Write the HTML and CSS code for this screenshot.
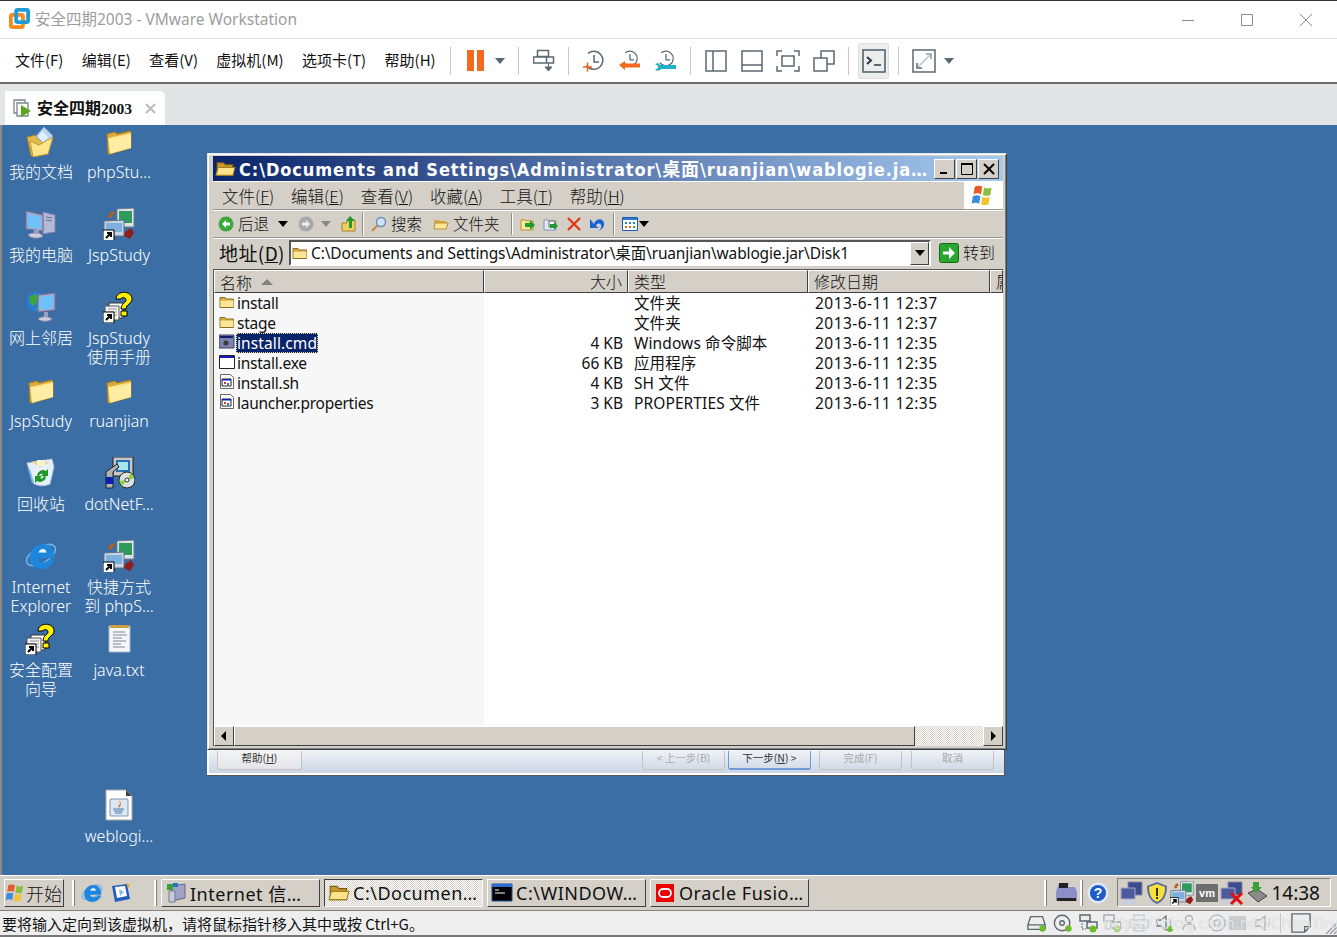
FILE: index.html
```html
<!DOCTYPE html>
<html lang="zh">
<head>
<meta charset="utf-8">
<title>安全四期2003 - VMware Workstation</title>
<link rel="stylesheet" href="styles.css">
</head>
<body>
<svg class="sprite" xmlns="http://www.w3.org/2000/svg">
  <symbol id="folder" viewBox="0 0 32 32"><path d="M4 9l8-2 2 2 13-3 1 1v16L7 29H5z" fill="#d9a93a" stroke="#a57f22"/><path d="M5 13l23-5v15L7 29z" fill="#fde58c"/><path d="M7 28l21-5V10L6 14z" fill="#fff2b0" opacity=".6"/></symbol>
  <symbol id="mydocs" viewBox="0 0 32 32"><path d="M2 12l8-2 2 2 14-2-4 18-16 3z" fill="#e3b84a" stroke="#a57f22"/><path d="M11 11l8-9 9 9-8 9z" fill="#b9d4f7" stroke="#7ea3d5"/><path d="M17 6l6 6-5 5-5-5z" fill="#e5f0ff"/><path d="M5 16l9 4 14-8-5 17-15 3z" fill="#fde58c" stroke="#c09a34"/></symbol>
  <symbol id="pc" viewBox="0 0 32 32"><path d="M18 4l12 3v17l-12 2z" fill="#b6b8d8" stroke="#7f81a6"/><path d="M21 9l6 1M21 12l6 1" stroke="#66688f"/><path d="M1 3l17 4v16L1 21z" fill="#a5a8cf" stroke="#6f7196"/><path d="M3 6l13 3v12L3 19z" fill="#6ec2fb"/><path d="M3 27c3-3 12-3 15 1-3 3-12 3-15-1z" fill="#cdcde0" stroke="#8688a6"/><path d="M9 22h5v4H9z" fill="#9a9cc0"/></symbol>
  <symbol id="net" viewBox="0 0 32 32"><circle cx="11" cy="11" r="10" fill="#2a7bd6"/><path d="M4 6l6-3 5 3-3 5-4 4-3-3zM11 16l5 1-1 4-3-1z" fill="#3fa63c"/><path d="M13 4l17-2v17l-17 2z" fill="#a5a8cf" stroke="#6f7196"/><path d="M15 6l13-2v13l-13 2z" fill="#6ec2fb"/><path d="M13 28c3-3 11-3 14 0-3 3-11 3-14 0z" fill="#cdcde0" stroke="#8688a6"/><path d="M19 21h4v5h-4z" fill="#9a9cc0"/></symbol>
  <symbol id="jsp" viewBox="0 0 32 32"><path d="M14 1l17-1v19H14z" fill="#dfe3e8" stroke="#6f7f8f"/><path d="M16 3h13v12H16z" fill="#2f9b5a"/><path d="M10 3c-3 1-5 4-4 7l4-1-1-2 3-1z" fill="#b2601c"/><path d="M1 13l20-1v16H1z" fill="#c8d4e4" stroke="#5f7088"/><path d="M3 15h16v9H3z" fill="#7db0de"/><path d="M22 24l6-4 3 5-4 6-6-3z" fill="#8e1f1f"/><path d="M0 22h11v11H0z" fill="#fff" stroke="#000"/><path d="M3 30l4-4M4 25h4v4" stroke="#000" stroke-width="2" fill="none"/></symbol>
  <symbol id="help" viewBox="0 0 32 32"><path d="M6 12h14v15H6z" fill="#fff" stroke="#333"/><path d="M2 15h14v14H2z" fill="#f2f2f2" stroke="#555"/><path d="M5 18h9M5 21h9M5 24h9" stroke="#999"/><path d="M13 8c0-9 16-9 16 0 0 5-6 5-6 10h-5c0-6 5-6 5-9 0-3-5-3-5-1z" fill="#ffef00" stroke="#000"/><path d="M18 20h6v5h-6z" fill="#ffef00" stroke="#000"/><path d="M0 21h11v11H0z" fill="#fff" stroke="#000"/><path d="M3 29l4-4M4 24h4v4" stroke="#000" stroke-width="2" fill="none"/></symbol>
  <symbol id="recycle" viewBox="0 0 32 32"><path d="M2 6l25-4 2 8-4 17c-6 3-13 2-17-1z" fill="#e6eef7" stroke="#a9bcd2"/><path d="M6 5l10-2 8 3-9 4z" fill="#e4d79a"/><path d="M12 3h8v6h-8z" fill="#f7f3d0"/><path d="M12 18a6 6 0 0 1 9-4l2-2v7h-7l2-2c-2-1-4 0-4 3zM21 20a6 6 0 0 1-9 4l-2 2v-7h7l-2 2c2 1 4 0 4-3z" fill="#1a9a22"/><path d="M4 12l4 14" stroke="#7db4e8" stroke-width="2"/></symbol>
  <symbol id="dotnet" viewBox="0 0 32 32"><path d="M10 0h20v19H10z" fill="#c8c8c8" stroke="#222"/><path d="M13 3h14v12H13z" fill="#2a6fb5"/><path d="M15 5h10v8H15z" fill="#a8e6ef"/><path d="M7 12l7-5 2 3-6 5v16H3V15z" fill="#b0b0b0" stroke="#222"/><path d="M3 20h7v7H3z" fill="#0a1fb0"/><circle cx="24" cy="23" r="8" fill="#d8e0e0" stroke="#222"/><path d="M24 23l4-7 3 5zM24 23l-5 6-3-5z" fill="#8fcf3a"/><circle cx="24" cy="23" r="2" fill="#fff" stroke="#333"/></symbol>
  <symbol id="ie" viewBox="0 0 32 32"><ellipse cx="16" cy="15" rx="16" ry="8" transform="rotate(-30 16 15)" fill="none" stroke="#6fb3e8" stroke-width="1.6"/><path d="M13 13h9c0-6-8-6-9 0z" fill="#e4f3ff"/><path d="M5 18C5 7 16 2 24 6c5 3 5 9 5 12H13c0 5 8 6 12 2h4c-3 8-13 11-19 7-3-2-5-5-5-9zm8-5h9c0-6-8-6-9 0z" fill="#1f86de" stroke="#1f86de" stroke-width=".8" fill-rule="evenodd"/></symbol>
  <symbol id="note" viewBox="0 0 32 32"><path d="M6 3h21v26H6z" fill="#f4f6fb" stroke="#aab4c8"/><path d="M7 2h19v3H7z" fill="#c7a040"/><path d="M10 9h12M10 12h14M10 15h9M10 18h13M10 21h8M10 24h12" stroke="#7f8896"/></symbol>
  <symbol id="javafile" viewBox="0 0 32 32"><path d="M3 1h20l6 6v24H3z" fill="#fff" stroke="#a8a8a8"/><path d="M23 1v6h6z" fill="#444"/><rect x="7" y="10" width="18" height="17" rx="1" fill="#dbe7f2" stroke="#7d96ae"/><path d="M16 12c3 3-2 4 0 7 1-2 3-3 1-7z" fill="#e8731a"/><path d="M10 20h11M11 22h9M12 24h7" stroke="#4a7aa6"/></symbol>
  <symbol id="f16" viewBox="0 0 16 16"><path d="M1 5V3.500h5L7 5h7.500v8.500H1z" fill="#d8a93a" stroke="#8a6f20"/><path d="M1.500 6.500h13v6.500h-13z" fill="#fde59a"/></symbol>
  <symbol id="fopen" viewBox="0 0 20 16"><path d="M2 2h6l2 2h7v10H2z" fill="#c9992b" stroke="#7d5c10"/><path d="M3 6.500h16l-2 7.500H1z" fill="#fce38c" stroke="#a47f20"/></symbol>
  <symbol id="cmdfile" viewBox="0 0 16 16"><path d="M0 1h15v13H0z" fill="#7c84ad" stroke="#3b3f66"/><path d="M1 2h13v2H1z" fill="#131c6e"/><circle cx="7" cy="9" r="2.500" fill="#3b3b3b"/></symbol>
  <symbol id="exefile" viewBox="0 0 16 16"><path d="M.5 1.500h15v13H.5z" fill="#fff" stroke="#222"/><path d="M1 2h14v2H1z" fill="#0c1ec0"/></symbol>
  <symbol id="shfile" viewBox="0 0 16 16"><path d="M1.500.500h10l3 3v11h-13z" fill="#fff" stroke="#666"/><path d="M3 5h9v7H3z" fill="#fff" stroke="#222"/><path d="M3 5h9v1.500H3z" fill="#0c1ec0"/><path d="M5 8h2v2H5z" fill="#d33"/><path d="M8 9h2v2H8z" fill="#27a"/></symbol>
  <symbol id="winflag" viewBox="0 0 20 20"><path d="M3 3c2-1 4-1 6 0l-1 6c-2-1-4-1-6 0z" fill="#e8592b"/><path d="M10.500 3.500c2 1 4 1 6 0l-1 6c-2 1-4 1-6 0z" fill="#8cbf3f"/><path d="M1.500 10.500c2-1 4-1 6 0l-1 6c-2-1-4-1-6 0z" fill="#3d8be0"/><path d="M9 11c2 1 4 1 6 0l-1 6c-2 1-4 1-6 0z" fill="#f4c430"/></symbol>
  <symbol id="ctrlalt" viewBox="0 0 22 24"><path d="M4.500 1.500h11v6h-11zM.5 8h13v6H.5zM13.500 8h7v6h-7z" fill="none" stroke="#5a6872" stroke-width="1.500"/><path d="M15.500 14v5M12 18h7l-3.500 4z" fill="#5a6872" stroke="#5a6872"/></symbol>
  <symbol id="clock" viewBox="0 0 22 22"><path d="M5 3.500a9 9 0 1 1-1.500 12" fill="none" stroke="#5a6872" stroke-width="1.500"/><path d="M11 5v7h5" fill="none" stroke="#5a6872" stroke-width="1.500"/></symbol>
  <symbol id="view1" viewBox="0 0 22 22"><path d="M1 1h20v20H1zM8 1v20" fill="none" stroke="#5a6872" stroke-width="1.500"/></symbol>
  <symbol id="view2" viewBox="0 0 22 22"><path d="M1 1h20v20H1zM1 15h20" fill="none" stroke="#5a6872" stroke-width="1.500"/></symbol>
  <symbol id="view3" viewBox="0 0 24 22"><path d="M6 1H1v5M18 1h5v5M6 21H1v-5M18 21h5v-5M6 6h12v10H6z" fill="none" stroke="#5a6872" stroke-width="1.500"/></symbol>
  <symbol id="view4" viewBox="0 0 22 22"><path d="M1 8h13v13H1zM8 8V1h13v13h-7" fill="none" stroke="#5a6872" stroke-width="1.500"/></symbol>
  <symbol id="term" viewBox="0 0 24 24"><path d="M1 1h22v22H1z" fill="none" stroke="#4a5b68" stroke-width="1.500"/><path d="M5 8l4 3.500L5 15" fill="none" stroke="#2e3b44" stroke-width="2"/><path d="M12 16h7" stroke="#2e3b44" stroke-width="1.500"/></symbol>
  <symbol id="full" viewBox="0 0 24 24"><path d="M1 1h22v22H1z" fill="none" stroke="#5a6872" stroke-width="1.500"/><path d="M6 18L18 6" stroke="#b7c0c8" stroke-width="1.500"/><path d="M14 5h5v5" fill="none" stroke="#8a9aa6" stroke-width="1.500"/><path d="M5 14v5h5" fill="none" stroke="#5a6872" stroke-width="1.500"/></symbol>
  <symbol id="hdd" viewBox="0 0 22 18"><path d="M4 2h13l3 9v5H1v-5zM1 11h19" fill="none" stroke="#5a6872" stroke-width="1.500"/><circle cx="17" cy="15" r="3.500" fill="#6cbf2a"/></symbol>
  <symbol id="cd" viewBox="0 0 22 20"><circle cx="10" cy="10" r="8.500" fill="none" stroke="#5a6872" stroke-width="1.500"/><circle cx="10" cy="10" r="2.500" fill="none" stroke="#5a6872" stroke-width="1.500"/><circle cx="17" cy="16" r="3.500" fill="#6cbf2a"/></symbol>
  <symbol id="lan" viewBox="0 0 20 20"><path d="M1 2h10v6H1zM8 9h10v6H8z" fill="none" stroke="#5a6872" stroke-width="1.500"/><path d="M3 10v6h4" fill="none" stroke="#5a6872" stroke-dasharray="2 1"/><circle cx="14" cy="16" r="3.500" fill="#6cbf2a"/></symbol>
  <symbol id="printer" viewBox="0 0 20 20"><path d="M5 7V2h10v5M1 7h18v8H1zM5 12h10v6H5z" fill="none" stroke="#a9b2b8" stroke-width="1.300"/></symbol>
  <symbol id="speaker" viewBox="0 0 20 20"><path d="M2 7h4l5-4v14l-5-4H2z" fill="none" stroke="#6c7880" stroke-width="1.300"/><path d="M14 6c2 2 2 6 0 8" fill="none" stroke="#a9b2b8"/><circle cx="15" cy="16" r="3" fill="#6cbf2a"/></symbol>
  <symbol id="speaker2" viewBox="0 0 20 20"><path d="M2 7h4l5-4v14l-5-4H2z" fill="none" stroke="#a9b2b8" stroke-width="1.300"/><path d="M14 6c2 2 2 6 0 8" fill="none" stroke="#c4cbd0"/></symbol>
  <symbol id="stick" viewBox="0 0 20 20"><circle cx="8" cy="6" r="3.500" fill="none" stroke="#a9b2b8" stroke-width="1.300"/><path d="M2 17c0-4 3-6 6-6s6 2 6 6" fill="none" stroke="#a9b2b8" stroke-width="1.300"/></symbol>
  <symbol id="disc" viewBox="0 0 20 20"><circle cx="10" cy="10" r="8" fill="none" stroke="#b4bbc0" stroke-width="1.300"/><circle cx="10" cy="10" r="3" fill="none" stroke="#b4bbc0" stroke-width="1.300"/></symbol>
  <symbol id="memo" viewBox="0 0 22 22"><path d="M1 1h20v14l-6 6H1zM21 15h-6v6" fill="none" stroke="#5a6872" stroke-width="1.500"/></symbol>
  <symbol id="traynet" viewBox="0 0 24 24"><path d="M8 1h14v13H8z" fill="#3b4c8f" stroke="#889"/><path d="M1 7h14v11H1z" fill="#4a5a9f" stroke="#aab"/><path d="M2 19h14v4H2z" fill="#c9cde0"/></symbol>
  <symbol id="shield" viewBox="0 0 24 24"><path d="M12 1l10 4c0 9-3 15-10 18C5 20 2 14 2 5z" fill="#5a6a9a"/><path d="M12 3l8 3c0 7-2 12-8 15C6 18 4 13 4 6z" fill="#f7e03a"/><path d="M11 7h2v8h-2zM11 16h2v2h-2z" fill="#333"/></symbol>
</svg>

<div class="app">
  <header class="titlebar">
    <svg class="logo" viewBox="0 0 20 20"><rect x="1.800" y="6.500" width="11.500" height="11.700" rx="1.500" fill="none" stroke="#f58a1f" stroke-width="3.600"/><rect x="6.800" y="1.800" width="11.400" height="11.700" rx="1.500" fill="none" stroke="#1f9ad6" stroke-width="3.600"/></svg>
    <span class="app-title">安全四期2003 - VMware Workstation</span>
    <div class="winctl">
      <svg viewBox="0 0 14 14"><path d="M1 7.500h12" stroke="#8b8b8b"/></svg>
      <svg viewBox="0 0 14 14"><path d="M1.500 1.500h11v11h-11z" fill="none" stroke="#8b8b8b"/></svg>
      <svg viewBox="0 0 14 14"><path d="M1 1l12 12M13 1L1 13" stroke="#8b8b8b"/></svg>
    </div>
  </header>

  <nav class="toolbar">
    <div class="menus"><span>文件(F)</span><span>编辑(E)</span><span>查看(V)</span><span>虚拟机(M)</span><span>选项卡(T)</span><span>帮助(H)</span></div>
    <i class="tsep first"></i>
    <div class="pause"><b></b><b></b></div><i class="caret"></i>
    <i class="tsep s1"></i>
    <svg class="ti i-ctrl"><use href="#ctrlalt"/></svg>
    <i class="tsep s2"></i>
    <svg class="ti i-clock" viewBox="0 0 22 22"><use href="#clock" width="22" height="22"/><path d="M0 17h9M4.500 12.500v9" stroke="#e8641e" stroke-width="1.500"/></svg>
    <svg class="ti i-clock" viewBox="0 0 22 22"><use href="#clock" width="22" height="18"/><path d="M0 15l6-4v2.500h15v4H6V20z" fill="#f4691f"/></svg>
    <svg class="ti i-clock" viewBox="0 0 22 22"><use href="#clock" width="22" height="18"/><path d="M0 14c2-1 4-1 5 1h16v4H6c-1 2-4 2-6 1l3-2v-2z" fill="#1fb0cc"/></svg>
    <i class="tsep s3"></i>
    <svg class="ti i-view"><use href="#view1"/></svg>
    <svg class="ti i-view"><use href="#view2"/></svg>
    <svg class="ti i-view3"><use href="#view3"/></svg>
    <svg class="ti i-view4"><use href="#view4"/></svg>
    <i class="tsep s4"></i>
    <div class="term-btn"><svg><use href="#term"/></svg></div>
    <i class="tsep s5"></i>
    <svg class="ti i-full"><use href="#full"/></svg><i class="caret c2"></i>
  </nav>

  <div class="tabbar">
    <div class="tab">
      <svg class="tab-ico" viewBox="0 0 18 18"><path d="M1 1h11v13H1z" fill="none" stroke="#7a858d" stroke-width="1.300"/><path d="M4 4h11v13H4z" fill="#fff" stroke="#7a858d" stroke-width="1.300"/><path d="M8 6l10 6-10 6z" fill="#5aa51e"/></svg>
      <span class="tab-name">安全四期<em>2003</em></span>
      <svg class="tab-x" viewBox="0 0 11 11"><path d="M1 1l9 9M10 1l-9 9" stroke="#b9bcc0" stroke-width="2"/></svg>
    </div>
  </div>

  <main class="desktop">
    <div class="dgrid">
      <div class="dicon"><svg><use href="#mydocs"/></svg><span>我的文档</span></div>
      <div class="dicon"><svg><use href="#folder"/></svg><span>phpStu…</span></div>
      <div class="dicon"><svg><use href="#pc"/></svg><span>我的电脑</span></div>
      <div class="dicon"><svg><use href="#jsp"/></svg><span>JspStudy</span></div>
      <div class="dicon"><svg><use href="#net"/></svg><span>网上邻居</span></div>
      <div class="dicon"><svg><use href="#help"/></svg><span>JspStudy<br>使用手册</span></div>
      <div class="dicon"><svg><use href="#folder"/></svg><span>JspStudy</span></div>
      <div class="dicon"><svg><use href="#folder"/></svg><span>ruanjian</span></div>
      <div class="dicon"><svg><use href="#recycle"/></svg><span>回收站</span></div>
      <div class="dicon"><svg><use href="#dotnet"/></svg><span>dotNetF…</span></div>
      <div class="dicon"><svg><use href="#ie"/></svg><span>Internet<br>Explorer</span></div>
      <div class="dicon"><svg><use href="#jsp"/></svg><span>快捷方式<br>到 phpS…</span></div>
      <div class="dicon"><svg><use href="#help"/></svg><span>安全配置<br>向导</span></div>
      <div class="dicon"><svg><use href="#note"/></svg><span>java.txt</span></div>
      <div class="dicon slot-last"><svg><use href="#javafile"/></svg><span>weblogi…</span></div>
    </div>

    <section class="wizard">
      <div class="wz-row">
        <span class="wz-btn help">帮助(<u>H</u>)</span>
        <span class="wz-btn off back">&lt; 上一步(B)</span>
        <span class="wz-btn next">下一步(<u>N</u>) &gt;</span>
        <span class="wz-btn off finish">完成(F)</span>
        <span class="wz-btn off cancel">取消</span>
      </div>
    </section>

    <section class="explorer">
      <div class="ex-title">
        <svg class="ex-ico"><use href="#fopen"/></svg>
        <span class="ex-caption">C:\Documents and Settings\Administrator\桌面\ruanjian\wablogie.ja…</span>
        <span class="capbtn min"><svg viewBox="0 0 16 14"><path d="M3 11h7" stroke="#000" stroke-width="2"/></svg></span>
        <span class="capbtn max"><svg viewBox="0 0 16 14"><path d="M2.500 2.500h11v10h-11z" fill="none" stroke="#000"/><path d="M2 2h12" stroke="#000" stroke-width="2"/></svg></span>
        <span class="capbtn close"><svg viewBox="0 0 16 14"><path d="M3 2l10 10M13 2L3 12" stroke="#000" stroke-width="2"/></svg></span>
      </div>
      <div class="ex-menu">
        <span>文件(<u>F</u>)</span><span>编辑(<u>E</u>)</span><span>查看(<u>V</u>)</span><span>收藏(<u>A</u>)</span><span>工具(<u>T</u>)</span><span>帮助(<u>H</u>)</span>
        <div class="flag"><svg><use href="#winflag"/></svg></div>
      </div>
      <div class="ex-tools">
        <svg class="t16" viewBox="0 0 16 16"><circle cx="8" cy="8" r="7.500" fill="#3ba83b"/><path d="M8 4L4 8l4 4V9.500h4v-3H8z" fill="#fff"/></svg>
        <span class="tlabel back-l">后退</span><i class="dcaret"></i>
        <svg class="t16 t-fwd" viewBox="0 0 16 16"><circle cx="8" cy="8" r="7.500" fill="#a8a8a8"/><path d="M8 4l4 4-4 4V9.500H4v-3h4z" fill="#eee"/></svg>
        <i class="dcaret gray"></i>
        <svg class="t16 t-up" viewBox="0 0 16 16"><path d="M1 7h5V4h8v11H1z" fill="#f2cd62" stroke="#a58428"/><path d="M9 0l5 5h-3v7H8V5H5z" fill="#1f9a2d"/></svg>
        <i class="vsep"></i>
        <svg class="t16" viewBox="0 0 16 16"><circle cx="10" cy="6" r="4.500" fill="#cfe6fa" stroke="#6a8fb8" stroke-width="1.500"/><path d="M6.500 9.500L1 15" stroke="#c08a3a" stroke-width="2"/></svg>
        <span class="tlabel">搜索</span>
        <svg class="t16 t-fold" viewBox="0 0 16 16"><path d="M1 4h5l1 1h6v2H1z" fill="#d9a93a"/><path d="M2 7h13l-2 6H1z" fill="#fde59a" stroke="#b8912f"/></svg>
        <span class="tlabel">文件夹</span>
        <i class="vsep"></i>
        <svg class="t16" viewBox="0 0 16 16"><path d="M1 4h5l1 1h6v9H1z" fill="#fde59a" stroke="#b8912f"/><path d="M5 7h5V4l5 5-5 5v-3H5z" fill="#1f9a2d"/></svg>
        <svg class="t16" viewBox="0 0 16 16"><path d="M1 4h5l1 1h6v9H1z" fill="#dfe6f5" stroke="#8a94b0"/><path d="M6 5h6v6H6z" fill="#fff" stroke="#666"/><path d="M7 8h4V6l4 4-4 4v-2H7z" fill="#1f9a2d"/></svg>
        <svg class="t16" viewBox="0 0 16 16"><path d="M2 2l12 12M14 2L2 14" stroke="#e0391a" stroke-width="2.400"/></svg>
        <svg class="t16 t-undo" viewBox="0 0 16 16"><path d="M5 8C7 2 14 2 15 7c1 3-2 6-5 8 2-3 3-4 2-6-1-2-4-2-5 1l3 2H1V3z" fill="#1a63d6"/></svg>
        <i class="vsep"></i>
        <svg class="t16" viewBox="0 0 16 16"><path d="M.5 1.500h15v13H.5z" fill="#fff" stroke="#1b5fb5"/><path d="M1 2h14v2H1z" fill="#2a7bd6"/><path d="M3 6h2v2H3zM7 6h2v2H7zM11 6h2v2h-2z" fill="#2a7bd6"/><path d="M3 10h2v2H3zM7 10h2v2H7z" fill="#e0641a"/><path d="M11 10h2v2h-2z" fill="#3ba83b"/></svg>
        <i class="dcaret tight"></i>
      </div>
      <div class="ex-addr">
        <span class="addr-l">地址(<u>D</u>)</span>
        <div class="addr-box">
          <svg><use href="#f16"/></svg>
          <span class="addr-v">C:\Documents and Settings\Administrator\桌面\ruanjian\wablogie.jar\Disk1</span>
          <span class="addr-drop"><i></i></span>
        </div>
        <svg class="go" viewBox="0 0 20 20"><rect x=".5" y=".5" width="19" height="19" rx="2" fill="#2aa52e" stroke="#136b18"/><path d="M4 8.500h6V4l6 6-6 6v-4.500H4z" fill="#fff"/></svg>
        <span class="go-l">转到</span>
      </div>
      <div class="listpane">
        <div class="lhead">
          <span class="h-name">名称<i class="sort"></i></span>
          <span class="h-size">大小</span>
          <span>类型</span>
          <span>修改日期</span>
          <span class="h-clip">属</span>
        </div>
        <div class="lbody">
          <div class="lrow"><span class="c-name"><svg><use href="#f16"/></svg><b>install</b></span><span class="c-size"></span><span class="c-type">文件夹</span><span class="c-date">2013-6-11 12:37</span></div>
          <div class="lrow"><span class="c-name"><svg><use href="#f16"/></svg><b>stage</b></span><span class="c-size"></span><span class="c-type">文件夹</span><span class="c-date">2013-6-11 12:37</span></div>
          <div class="lrow"><span class="c-name"><svg><use href="#cmdfile"/></svg><b class="sel">install.cmd</b></span><span class="c-size">4 KB</span><span class="c-type">Windows 命令脚本</span><span class="c-date">2013-6-11 12:35</span></div>
          <div class="lrow"><span class="c-name"><svg><use href="#exefile"/></svg><b>install.exe</b></span><span class="c-size">66 KB</span><span class="c-type">应用程序</span><span class="c-date">2013-6-11 12:35</span></div>
          <div class="lrow"><span class="c-name"><svg><use href="#shfile"/></svg><b>install.sh</b></span><span class="c-size">4 KB</span><span class="c-type">SH 文件</span><span class="c-date">2013-6-11 12:35</span></div>
          <div class="lrow"><span class="c-name"><svg><use href="#shfile"/></svg><b>launcher.properties</b></span><span class="c-size">3 KB</span><span class="c-type">PROPERTIES 文件</span><span class="c-date">2013-6-11 12:35</span></div>
        </div>
        <div class="hscroll">
          <span class="sb-btn"><svg viewBox="0 0 8 12"><path d="M6 1v10L1 6z" fill="#000"/></svg></span>
          <span class="sb-thumb"></span>
          <span class="sb-track"></span>
          <span class="sb-btn"><svg viewBox="0 0 8 12"><path d="M2 1v10l5-5z" fill="#000"/></svg></span>
        </div>
      </div>
    </section>
  </main>

  <div class="taskbar">
    <div class="start"><svg><use href="#winflag"/></svg><span>开始</span></div>
    <i class="grip g1"></i>
    <svg class="ql q1"><use href="#ie"/></svg>
    <svg class="ql q2" viewBox="0 0 22 22"><path d="M2 4l15-2 3 15-15 3z" fill="#1d5fc0"/><path d="M5 5l10-1 2 10-10 2z" fill="#fff"/><path d="M9 7l5 3-4 4z" fill="#8fb8e8"/><path d="M16 1l4 2-2 3z" fill="#f0a020"/></svg>
    <i class="grip g2"></i>
    <div class="task"><svg viewBox="0 0 22 22"><path d="M7 4l13-2v14l-13 3z" fill="#a0a3c8" stroke="#667"/><path d="M2 2h6v6H2z" fill="#3aa03a"/><path d="M8 1h5v4H8z" fill="#2a6fd0"/><path d="M4 9h6v11H4z" fill="#c8c9e0" stroke="#778"/></svg><span>Internet 信…</span></div>
    <div class="task active"><svg><use href="#fopen"/></svg><span>C:\Documen…</span></div>
    <div class="task"><svg viewBox="0 0 22 22"><path d="M1 2h20v17H1z" fill="#000" stroke="#1c4d96"/><path d="M1 2h20v3H1z" fill="#2a6fd0"/><path d="M4 8h4M4 11h10" stroke="#fff"/></svg><span>C:\WINDOW…</span></div>
    <div class="task"><svg viewBox="0 0 22 22"><rect x="2" y="2" width="18" height="18" fill="#ee0000"/><rect x="5" y="7" width="12" height="8" rx="4" fill="none" stroke="#fff" stroke-width="1.800"/></svg><span>Oracle Fusio…</span></div>
    <i class="grip g3"></i>
    <svg class="tb-print" viewBox="0 0 24 24"><path d="M5 2h10l-2 4h8l2 5v9H2v-9z" fill="#8b8fc8"/><path d="M5 2h9v5H5z" fill="#222"/><path d="M3 17h19v3H3z" fill="#222"/></svg>
    <i class="grip g4"></i>
    <svg class="tb-help" viewBox="0 0 22 22"><circle cx="11" cy="11" r="10.500" fill="#dfe8f5"/><circle cx="11" cy="11" r="8" fill="#1c5bc8"/><text x="11" y="16" text-anchor="middle" class="qmark">?</text></svg>
    <div class="tray">
      <svg><use href="#traynet"/></svg>
      <svg><use href="#shield"/></svg>
      <svg><use href="#jsp"/></svg>
      <svg viewBox="0 0 24 24"><rect x="1" y="3" width="22" height="18" rx="1" fill="#6e6e6e"/><text x="12" y="16" text-anchor="middle" class="vmt">vm</text></svg>
      <svg viewBox="0 0 24 24"><use href="#traynet" width="24" height="24"/><path d="M11 12l11 11M22 12L11 23" stroke="#e01010" stroke-width="3"/></svg>
      <svg viewBox="0 0 24 24"><path d="M3 12l9-4 10 7-9 6z" fill="#8a8a8a" stroke="#444"/><path d="M8 1h6v5h3l-6 6-5-6h2z" fill="#3aa03a"/></svg>
      <span class="clock">14:38</span>
    </div>
  </div>

  <footer class="statusbar">
    <span class="st-msg">要将输入定向到该虚拟机，请将鼠标指针移入其中或按 Ctrl+G。</span>
    <div class="st-icons">
      <svg><use href="#hdd"/></svg>
      <svg><use href="#cd"/></svg>
      <svg class="tight"><use href="#lan"/></svg>
      <svg class="faint"><use href="#lan"/></svg>
      <svg class="faint"><use href="#printer"/></svg>
      <svg><use href="#speaker"/></svg>
      <svg><use href="#stick"/></svg>
      <svg class="d"><use href="#disc"/></svg>
      <span class="st-block"></span>
      <svg><use href="#speaker2"/></svg>
      <i class="st-sep"></i>
      <svg><use href="#memo"/></svg>
      <svg class="resize" viewBox="0 0 12 12"><path d="M12 1L1 12M12 5l-7 7M12 9l-3 3" stroke="#9a9a9a" stroke-width="1.300"/></svg>
    </div>
    <span class="watermark">https://blog.csdn.net/ChenTing_</span>
  </footer>
</div>
</body>
</html>
```

FILE: styles.css
```css
* { box-sizing: border-box; }
html, body { margin: 0; height: 100%; overflow: hidden; background: #fff; }
body { font-family: "Noto Sans", "Noto Sans CJK SC", sans-serif; }
.sprite { display: block; width: 0; height: 0; }
i { display: block; font-style: normal; }
svg { display: block; flex: none; }

.app { display: flex; flex-direction: column; width: 1337px; height: 937px; border-top: 1px solid #333; }

/* window title */
.titlebar { height: 38px; display: flex; align-items: center; padding-left: 9px; background: #fff; border-bottom: 1px solid #e3e3e3; flex: none; }
.logo { width: 21px; height: 21px; margin-right: 5px; margin-top: -2px; }
.app-title { font: 15.500px "Noto Sans", "Noto Sans CJK SC", sans-serif; color: #9d9d9d; margin-top: -2px; }
.winctl { margin-left: auto; display: flex; gap: 45px; padding-right: 24px; }
.winctl svg { width: 14px; height: 14px; }

/* toolbar */
.toolbar { height: 45px; display: flex; align-items: center; flex: none; padding-left: 15px; background: #fff; border-bottom: 2px solid #6b6b6b; }
.menus { display: flex; gap: 18.400px; font: 15px "Noto Sans CJK SC", "Noto Sans", sans-serif; color: #111; width: 435px; margin-top: -2px; }
.tsep { width: 1px; height: 28px; background: #c5c5c5; }
.first { margin-right: 16px; }
.pause { display: flex; gap: 3px; }
.pause b { display: block; width: 7px; height: 21px; background: #f4691f; }
.caret { width: 0; height: 0; border: 5px solid transparent; border-top: 6px solid #5a6872; border-bottom: 0; margin-left: 11px; }
.s1 { margin-left: 13px; }
.ti { margin-left: 14px; }
.i-ctrl { width: 22px; height: 24px; }
.s2 { margin-left: 13px; }
.i-clock { width: 22px; height: 22px; }
.s2 + .i-clock { margin-left: 14px; }
.s3 { margin-left: 13px; }
.i-view { width: 22px; height: 22px; }
.ti.i-view3 { width: 24px; height: 22px; margin-left: 13px; }
.ti.i-view4 { width: 22px; height: 22px; margin-left: 13px; }
.s3 + .i-view { margin-left: 14px; }
.s4 { margin-left: 13px; }
.term-btn { width: 31px; height: 36px; margin-left: 9px; background: #eceded; border: 1px solid #dcdcdc; border-radius: 3px; display: flex; align-items: center; justify-content: center; }
.term-btn svg { width: 24px; height: 24px; }
.s5 { margin-left: 9px; }
.ti.i-full { width: 24px; height: 24px; margin-left: 13px; }
.c2 { margin-left: 8px; }

/* tabs */
.tabbar { height: 41px; flex: none; padding: 7px 0 0 5px; background: #e3e4e6; }
.tab { width: 160px; height: 34px; background: #fff; display: flex; align-items: center; padding-left: 8px; border-radius: 0 5px 0 0; }
.tab-ico { width: 18px; height: 18px; margin-right: 6px; }
.tab-name { font: 700 16px "Noto Sans CJK SC", sans-serif; color: #111; width: 108px; margin-top: -3px; }
.tab-name em { font: 700 15.500px "Liberation Serif", serif; }
.tab-x { width: 11px; height: 11px; }

/* desktop */
.desktop { position: relative; height: 750px; flex: none; background: #3b6ea5; border-left: 2px solid #8a8a8a; overflow: hidden; }
.dgrid { display: grid; grid-template-columns: 78px 78px; grid-auto-rows: 83px; }
.dicon { display: flex; flex-direction: column; align-items: center; color: #fff; font: 16px/19px "Noto Sans", "Noto Sans CJK SC", sans-serif; font-weight: 300; text-align: center; white-space: nowrap; }
.dicon svg { width: 32px; height: 32px; margin-bottom: 6px; }
.slot-last { grid-column: 2; grid-row: 9; }

/* explorer */
.explorer { position: absolute; left: 205px; top: 28px; width: 800px; height: 597px; background: #d4d0c8; border: 1px solid #404040; border-top-color: #e8e8e8; border-left-color: #e8e8e8; padding: 2px 3px 3px 5px; box-shadow: inset 1px 1px #fff, inset -1px -1px #808080; display: flex; flex-direction: column; }
.ex-title { height: 25px; background: linear-gradient(90deg, #0a246a, #a6caf0); display: flex; align-items: center; color: #fff; padding-left: 2px; flex: none; }
.ex-ico { width: 21px; height: 18px; }
.ex-caption { font: 700 18px "DejaVu Sans Condensed", "Noto Sans", "Noto Sans CJK SC", sans-serif; letter-spacing: .9px; margin: -2px 0 0 3px; width: 694px; white-space: nowrap; overflow: hidden; }
.capbtn { width: 21px; height: 20px; background: #d4d0c8; border: 1px solid; border-color: #fff #404040 #404040 #fff; display: flex; align-items: center; justify-content: center; margin-left: 1px; }
.capbtn svg { width: 16px; height: 14px; }
.ex-menu { height: 29px; display: flex; align-items: center; gap: 16.800px; padding-left: 9px; border-bottom: 1px solid #9a978f; border-top: 1px solid #fff; font: 16.500px "Noto Sans CJK SC", sans-serif; font-weight: 300; color: #111; flex: none; }
.flag { margin-left: auto; width: 39px; height: 27px; background: #fff; display: flex; align-items: center; justify-content: center; }
.flag svg { width: 25px; height: 25px; }
.ex-tools { height: 28px; display: flex; align-items: center; padding-left: 5px; border-bottom: 1px solid #9a978f; border-top: 1px solid #fff; flex: none; }
.t16 { width: 16px; height: 16px; margin-right: 7px; }
.t-up { margin-right: 5px; }
.tlabel { font: 15.500px "Noto Sans CJK SC", sans-serif; font-weight: 300; color: #111; margin: -2px 11px 0 -3px; }
.tlabel.back-l { margin-right: 9px; }
.dcaret { width: 0; height: 0; border: 5px solid transparent; border-top: 6px solid #000; border-bottom: 0; margin-right: 10px; }
.dcaret.gray { border-top-color: #888; }
.dcaret.tight { margin-left: -6px; }
.t-undo { margin-right: 8px; }
.vsep { width: 1px; height: 22px; background: #8f8c85; box-shadow: 1px 0 #fff; margin: 0 8px 0 0; }
.ex-addr { height: 29px; display: flex; align-items: center; padding-left: 5px; flex: none; border-top: 1px solid #fff; }
.addr-l { font: 19px "Noto Sans CJK SC", sans-serif; color: #111; width: 70px; letter-spacing: .4px; margin-top: -2px; margin-left: 1px; }
.addr-box { width: 642px; height: 26px; background: #fff; border: 2px solid; border-color: #555 #fff #fff #555; display: flex; align-items: center; padding-left: 1px; }
.addr-box svg { width: 16px; height: 16px; margin-right: 3px; }
.addr-v { font: 15.500px "Noto Sans", "Noto Sans CJK SC", sans-serif; color: #111; flex: 1; white-space: nowrap; overflow: hidden; letter-spacing: -.15px; margin-top: -2px; }
.addr-drop { width: 19px; height: 23px; background: #d4d0c8; border: 1px solid; border-color: #fff #404040 #404040 #fff; display: flex; align-items: center; justify-content: center; }
.addr-drop i { width: 0; height: 0; border: 5px solid transparent; border-top: 6px solid #000; border-bottom: 0; }
.go { width: 20px; height: 20px; margin-left: 8px; }
.go-l { font: 16px "Noto Sans CJK SC", sans-serif; font-weight: 300; color: #111; margin: -2px 0 0 4px; }

.listpane { flex: 1; display: flex; flex-direction: column; border: 1px solid #555; border-right: 0; border-bottom: 0; background: #fff; min-height: 0; margin-top: 2px; }
.lhead { height: 23px; display: grid; grid-template-columns: 270px 144px 180px 182px 1fr; background: #d4d0c8; flex: none; font: 16px "Noto Sans CJK SC", sans-serif; font-weight: 300; color: #111; }
.lhead span { border: 1px solid; border-color: #fff #404040 #404040 #fff; padding-left: 5px; line-height: 20px; overflow: hidden; white-space: nowrap; }
.lhead .h-name { display: flex; align-items: center; }
.sort { width: 0; height: 0; border: 6px solid transparent; border-bottom: 6px solid #808080; border-top: 0; margin-left: 9px; }
.lhead .h-size { text-align: right; padding-right: 5px; }
.lbody { flex: 1; min-height: 0; background: linear-gradient(90deg, #f7f7f7 270px, #fff 270px); }
.lrow { height: 20px; display: grid; grid-template-columns: 270px 144px 180px 1fr; font: 15.500px/20px "Noto Sans", "Noto Sans CJK SC", sans-serif; color: #111; }
.c-name { display: flex; align-items: center; padding-left: 5px; letter-spacing: -.25px; }
.c-name svg { width: 16px; height: 16px; margin-right: 1px; margin-top: -3px; }
.c-name b { font-weight: 400; padding: 0 1px; }
.c-name .sel { background: #0a246a; color: #fff; outline: 1px dotted #e8d48a; outline-offset: -1px; letter-spacing: .1px; padding: 0 1px 0 1px; }
.c-size { text-align: right; padding-right: 5px; }
.c-type { padding-left: 6px; letter-spacing: .1px; }
.c-date { padding-left: 7px; letter-spacing: .45px; }
.hscroll { height: 21px; display: flex; flex: none; background: #d4d0c8; border-top: 1px solid #fff; }
.sb-btn { width: 20px; background: #d4d0c8; border: 1px solid; border-color: #fff #404040 #404040 #fff; display: flex; align-items: center; justify-content: center; }
.sb-btn svg { width: 8px; height: 12px; }
.sb-thumb { width: 681px; background: #d4d0c8; border: 1px solid; border-color: #fff #404040 #404040 #fff; }
.sb-track { flex: 1; background: repeating-conic-gradient(#d4d0c8 0 25%, #fff 0 50%) 0 0 / 2px 2px; }

/* wizard behind */
.wizard { position: absolute; left: 205px; top: 570px; width: 798px; height: 81px; background: linear-gradient(180deg, #eef1f7 70%, #c9d3e3); border: 1px solid #555; border-left: 0; box-shadow: inset 0 -2px #fff, inset 2px 0 #fff; padding: 55px 0 0; }
.wz-row { display: flex; padding-left: 10px; }
.wz-btn { height: 19px; width: 83px; border: 1px solid #c4c4c4; border-top: 0; border-radius: 0 0 3px 3px; font: 10.500px/13px "Noto Sans CJK SC", sans-serif; color: #333; text-align: center; }
.wz-btn.off { color: #a9a9a9; }
.help { width: 85px; margin-right: 340px; background: linear-gradient(180deg, #f4f4f4, #e2e4ea); }
.next { margin: 0 8px 0 3px; border: 1px solid #6f9ad6; border-top: 0; border-bottom-width: 2px; }
.finish { margin-right: 9px; }

/* taskbar */
.taskbar { height: 36px; flex: none; display: flex; align-items: center; background: #d4d0c8; border-top: 1px solid #fff; border-bottom: 1px solid #808080; padding: 2px 0 3px 4px; }
.start { width: 60px; height: 28px; border: 1px solid; border-color: #fff #404040 #404040 #fff; display: flex; align-items: center; padding-left: 0; font: 18px "Noto Sans CJK SC", sans-serif; font-weight: 300; color: #111; white-space: nowrap; }
.start svg { width: 22px; height: 22px; margin-right: -1px; }
.grip { height: 26px; background: #fff; border-right: 1px solid #808080; width: 3px; }
.g1 { margin: 0 6px 0 8px; }
.ql { width: 22px; height: 22px; }
.q2 { margin-left: 7px; }
.g2 { margin: 0 4px 0 22px; }
.task { width: 159px; height: 28px; margin-right: 4px; border: 1px solid; border-color: #fff #404040 #404040 #fff; display: flex; align-items: center; padding-left: 3px; font: 18px "Noto Sans", "Noto Sans CJK SC", sans-serif; letter-spacing: .5px; color: #111; white-space: nowrap; }
.task svg { width: 22px; height: 22px; margin-right: 3px; }
.task.active { border-color: #404040 #fff #fff #404040; background: repeating-conic-gradient(#d4d0c8 0 25%, #fff 0 50%) 0 0 / 2px 2px; }
.g3 { margin-left: 231px; }
.tb-print { width: 24px; height: 24px; margin-left: 7px; }
.g4 { margin-left: 2px; }
.tb-help { width: 22px; height: 22px; margin-left: 4px; }
.qmark { font: 700 14px "Liberation Sans", sans-serif; fill: #fff; }
.vmt { font: 700 11px "Liberation Sans", sans-serif; fill: #fff; }
.tray { width: 214px; height: 29px; margin-left: 8px; border: 1px solid; border-color: #808080 #fff #fff #808080; display: flex; align-items: center; padding-left: 2px; gap: 1px; }
.tray svg { width: 24px; height: 24px; }
.clock { font: 19px "Noto Sans", sans-serif; color: #111; margin-left: auto; padding-right: 10px; }

/* status */
.statusbar { height: 26px; flex: none; position: relative; display: flex; align-items: center; background: #eeeeee; border-bottom: 2px solid #777; }
.st-msg { font: 15px "Noto Sans CJK SC", "Noto Sans", sans-serif; color: #111; padding-left: 2px; }
.st-icons { margin-left: auto; display: flex; align-items: center; }
.st-icons svg { width: 20px; height: 20px; margin-right: 6px; }
.st-icons .tight { margin-right: 4px; }
.st-icons .d { margin-right: 2px; }
.st-icons .faint { opacity: .5; }
.st-block { width: 17px; height: 14px; background: #c9cdd0; margin-right: 8px; }
.st-sep { width: 1px; height: 20px; background: #c5c5c5; margin: 0 10px 0 0; }
.st-icons .resize { width: 12px; height: 12px; margin: 10px 0 0 8px; }
.watermark { position: absolute; left: 1103px; top: 0; font: 16.500px "Noto Sans", sans-serif; color: rgba(255,255,255,.7); text-shadow: 0 0 1px rgba(120,120,120,.45); white-space: nowrap; }
```
